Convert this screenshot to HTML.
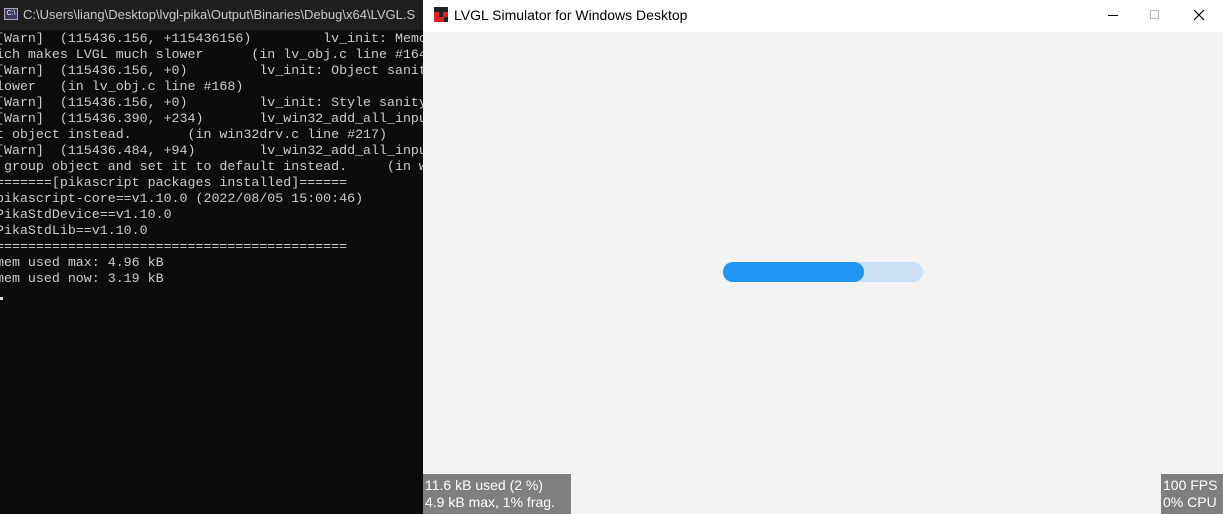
<!DOCTYPE html>
<html><head><meta charset="utf-8"><style>
*{margin:0;padding:0;box-sizing:border-box}
html,body{width:1223px;height:514px;overflow:hidden}
body{background:#0c0c0c;position:relative;font-family:"Liberation Sans",sans-serif}
#con{position:absolute;left:0;top:0;width:423px;height:514px;background:#0c0c0c;overflow:hidden}
#ctitle{position:absolute;left:0;top:0;width:423px;height:30px;background:#1f1f1f;color:#c8c8c8;font-size:13px;line-height:30px;white-space:nowrap;overflow:hidden}
#ctitle .ic{position:absolute;left:4px;top:8px;width:14px;height:12px;background:#3a3a6a;border:1px solid #aaa;font-size:7px;line-height:10px;color:#fff;text-align:center}
#ctitle span.t{position:absolute;left:23px}
pre{position:absolute;left:-4px;top:31px;font-family:"Liberation Mono","Noto Sans CJK SC",monospace;font-size:13.3px;line-height:16px;color:#cccccc;white-space:pre}
#cur{position:absolute;left:0;top:297px;width:3px;height:3px;background:#ddd}
#win{position:absolute;left:423px;top:0;width:800px;height:514px;background:#f3f3f3;overflow:hidden}
#wt{position:absolute;left:0;top:0;width:800px;height:32px;background:#fff;font-size:14px;color:#000}
#wt .t{position:absolute;left:31px;top:7px}
.lg{position:absolute;left:11px;top:7px;width:14px;height:15px;background:#222}
.lg i{position:absolute;background:#e02020;width:5px;height:5px}
.bar{position:absolute;left:300px;top:262px;width:200px;height:20px;border-radius:10px;background:#c9e0f5}
.ind{position:absolute;left:0;top:0;width:141px;height:20px;border-radius:10px;background:#2196f3}
.ov{position:absolute;background:#7f7f7f;color:#fff;font-size:14px;line-height:17px;padding:3px 2px;white-space:nowrap;overflow:hidden}
</style></head><body>
<div id="con">
<div id="ctitle"><div class="ic">C:\</div><span class="t">C:\Users\liang\Desktop\lvgl-pika\Output\Binaries\Debug\x64\LVGL.S</span></div>
<pre>[Warn]  (115436.156, +115436156)         lv_init: Memo
ich makes LVGL much slower      (in lv_obj.c line #164
[Warn]  (115436.156, +0)         lv_init: Object sanit
lower   (in lv_obj.c line #168)
[Warn]  (115436.156, +0)         lv_init: Style sanity
[Warn]  (115436.390, +234)       lv_win32_add_all_inpu
t object instead.       (in win32drv.c line #217)
[Warn]  (115436.484, +94)        lv_win32_add_all_inpu
 group object and set it to default instead.     (in wi
=======[pikascript packages installed]======
pikascript-core==v1.10.0 (2022/08/05 15:00:46)
PikaStdDevice==v1.10.0
PikaStdLib==v1.10.0
============================================
mem used max: 4.96 kB
mem used now: 3.19 kB</pre>
<div id="cur"></div>
</div>
<div id="win">
<div id="wt"><div class="lg"><i style="left:0;top:10px"></i><i style="left:5px;top:10px"></i><i style="left:9px;top:5px"></i><i style="left:0;top:5px"></i></div><span class="t">LVGL Simulator for Windows Desktop</span>
<div style="position:absolute;left:685px;top:15px;width:10px;height:1px;background:#000"></div>
<div style="position:absolute;left:727px;top:10px;width:9px;height:9px;border:1px solid #bbb"></div>
<svg style="position:absolute;left:770px;top:9px" width="12" height="12"><path d="M1 1L11 11M11 1L1 11" stroke="#000" stroke-width="1.2"/></svg>
</div>
<div class="bar"><div class="ind"></div></div>
<div class="ov" style="left:0;top:474px;width:148px;height:40px">11.6 kB used (2 %)<br>4.9 kB max, 1% frag.</div>
<div class="ov" style="left:738px;top:474px;width:62px;height:40px">100 FPS<br>0% CPU</div>
</div>
</body></html>
